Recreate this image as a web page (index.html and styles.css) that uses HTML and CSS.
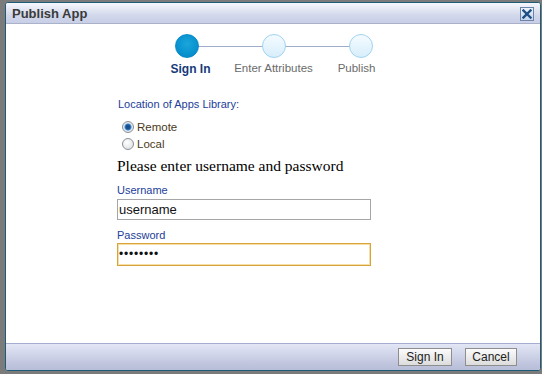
FILE: index.html
```html
<!DOCTYPE html>
<html>
<head>
<meta charset="utf-8">
<link rel="stylesheet" href="styles.css">
</head>
<body>
<div class="dialog">
  <div class="titlebar">
    <span class="title">Publish App</span>
    <span class="close">
      <svg width="10" height="10" viewBox="0 0 10 10"><path d="M1.5 1.5 L8.5 8.5 M8.5 1.5 L1.5 8.5" stroke="#1d4f86" stroke-width="2.4" stroke-linecap="square"/></svg>
    </span>
  </div>
  <div class="content">
    <div class="train">
      <div class="steps">
        <div class="step active"><span class="dot"></span><span class="label">Sign In</span></div>
        <div class="step"><span class="dot"></span><span class="label">Enter Attributes</span></div>
        <div class="step"><span class="dot"></span><span class="label">Publish</span></div>
      </div>
    </div>
    <div class="form">
      <div class="loc">Location of Apps Library:</div>
      <div class="radios">
        <div class="radio"><span class="rb checked"></span><span>Remote</span></div>
        <div class="radio"><span class="rb"></span><span>Local</span></div>
      </div>
      <div class="prompt">Please enter username and password</div>
      <div class="flabel">Username</div>
      <div class="input">username</div>
      <div class="flabel pw">Password</div>
      <div class="input focus">••••••••</div>
    </div>
  </div>
  <div class="footer">
    <span class="btn signin">Sign In</span>
    <span class="btn cancel">Cancel</span>
  </div>
</div>
</body>
</html>
```
FILE: styles.css
```css
html, body { margin: 0; padding: 0; }
body {
  background: #7b7b7b;
  width: 542px;
  height: 374px;
  overflow: hidden;
  font-family: "Liberation Sans", Arial, sans-serif;
}
.dialog {
  margin: 2px 1px 0 5px;
  height: 367px;
  border: 1px solid #1d5d78;
  border-radius: 3px;
  background: #fff;
  display: flex;
  flex-direction: column;
  overflow: hidden;
}
.titlebar {
  height: 20px;
  border-bottom: 1px solid #a9b2c9;
  background: linear-gradient(#f5f7fc, #d3d9ec 60%, #c7cee6);
  display: flex;
  align-items: center;
  justify-content: space-between;
  padding: 0 6px 0 6px;
}
.title {
  font-weight: bold;
  font-size: 13px;
  color: #3b3b3b;
}
.close {
  width: 12px;
  height: 12px;
  border: 1px solid #6a84aa;
  background: linear-gradient(#eef2fa, #c7d3ea);
  display: flex;
  align-items: center;
  justify-content: center;
  margin-top: 1px;
}
.close svg { display: block; }
.content {
  flex: 1;
  display: flex;
  flex-direction: column;
}
.train {
  display: flex;
  justify-content: center;
  padding: 10px 0 0 0;
}
.steps {
  display: flex;
  margin-left: 1px;
}
.step {
  width: 87px;
  display: flex;
  flex-direction: column;
  align-items: center;
  position: relative;
}
.step + .step::before {
  content: "";
  position: absolute;
  top: 12px;
  right: 50%;
  width: 87px;
  height: 1px;
  background: #9daccb;
}
.dot {
  width: 22px;
  height: 22px;
  border-radius: 50%;
  border: 1px solid #9fd3f2;
  background: linear-gradient(#f4fbff, #d8eefb);
  position: relative;
  z-index: 1;
}
.active .dot {
  border-color: #0a8cc8;
  background: radial-gradient(circle at 50% 40%, #1aa6db, #0892cf 60%, #0a7fbd);
}
.label {
  margin-top: 4px;
  font-size: 11.5px;
  color: #6b6b6b;
  white-space: nowrap;
}
.active .label {
  color: #163a7a;
  font-weight: bold;
  font-size: 12px;
  margin-left: 8px;
}
.step:last-child .label { margin-right: 8px; }
.form {
  padding: 22px 0 0 111px;
  width: 254px;
}
.loc {
  font-size: 11px;
  color: #22409a;
  padding-left: 1px;
  height: 15px;
}
.radios {
  margin-top: 5px;
}
.radio {
  display: flex;
  align-items: center;
  gap: 3px;
  font-size: 11.5px;
  color: #4a3a1a;
  height: 17px;
  padding-left: 5px;
}
.rb {
  width: 10px;
  height: 10px;
  border-radius: 50%;
  border: 1px solid #8a8f97;
  background: radial-gradient(circle at 40% 35%, #fff, #d9dbde);
  display: inline-block;
}
.rb.checked {
  background: radial-gradient(circle, #1b4f8e 0 2px, #3a8bd3 3px, #e6e8ec 4px);
}
.prompt {
  font-family: "Liberation Serif", serif;
  font-size: 15.5px;
  color: #000;
  margin-top: 5px;
  height: 22px;
}
.flabel {
  font-size: 11px;
  color: #22409a;
  margin-top: 5px;
  height: 14px;
}
.flabel.pw {
  margin-top: 9px;
  height: 13px;
}
.input {
  box-sizing: border-box;
  width: 254px;
  height: 21px;
  border: 1px solid #a6a6a6;
  font-size: 13px;
  color: #111;
  padding: 0 1px;
  margin-top: 1px;
  line-height: 19px;
}
.input.focus {
  height: 23px;
  border-color: #d9a33c;
  box-shadow: inset 0 0 0 1px #f6dfa4;
  font-size: 12px;
  letter-spacing: 0.8px;
  line-height: 21px;
  margin-top: 1px;
}
.footer {
  height: 26px;
  border-top: 1px solid #a5add0;
  background: linear-gradient(#e2e6f5, #c3c8e0 70%, #b8bdd8);
  display: flex;
  justify-content: flex-end;
  align-items: center;
  gap: 13px;
  padding-right: 23px;
}
.btn {
  box-sizing: border-box;
  height: 18px;
  border: 1px solid #8e8e8e;
  background: linear-gradient(#fbfbfb, #e9e9e9 60%, #dcdcdc);
  font-size: 12px;
  color: #222;
  display: flex;
  align-items: center;
  justify-content: center;
}
.signin { width: 54px; }
.cancel { width: 52px; }
```
